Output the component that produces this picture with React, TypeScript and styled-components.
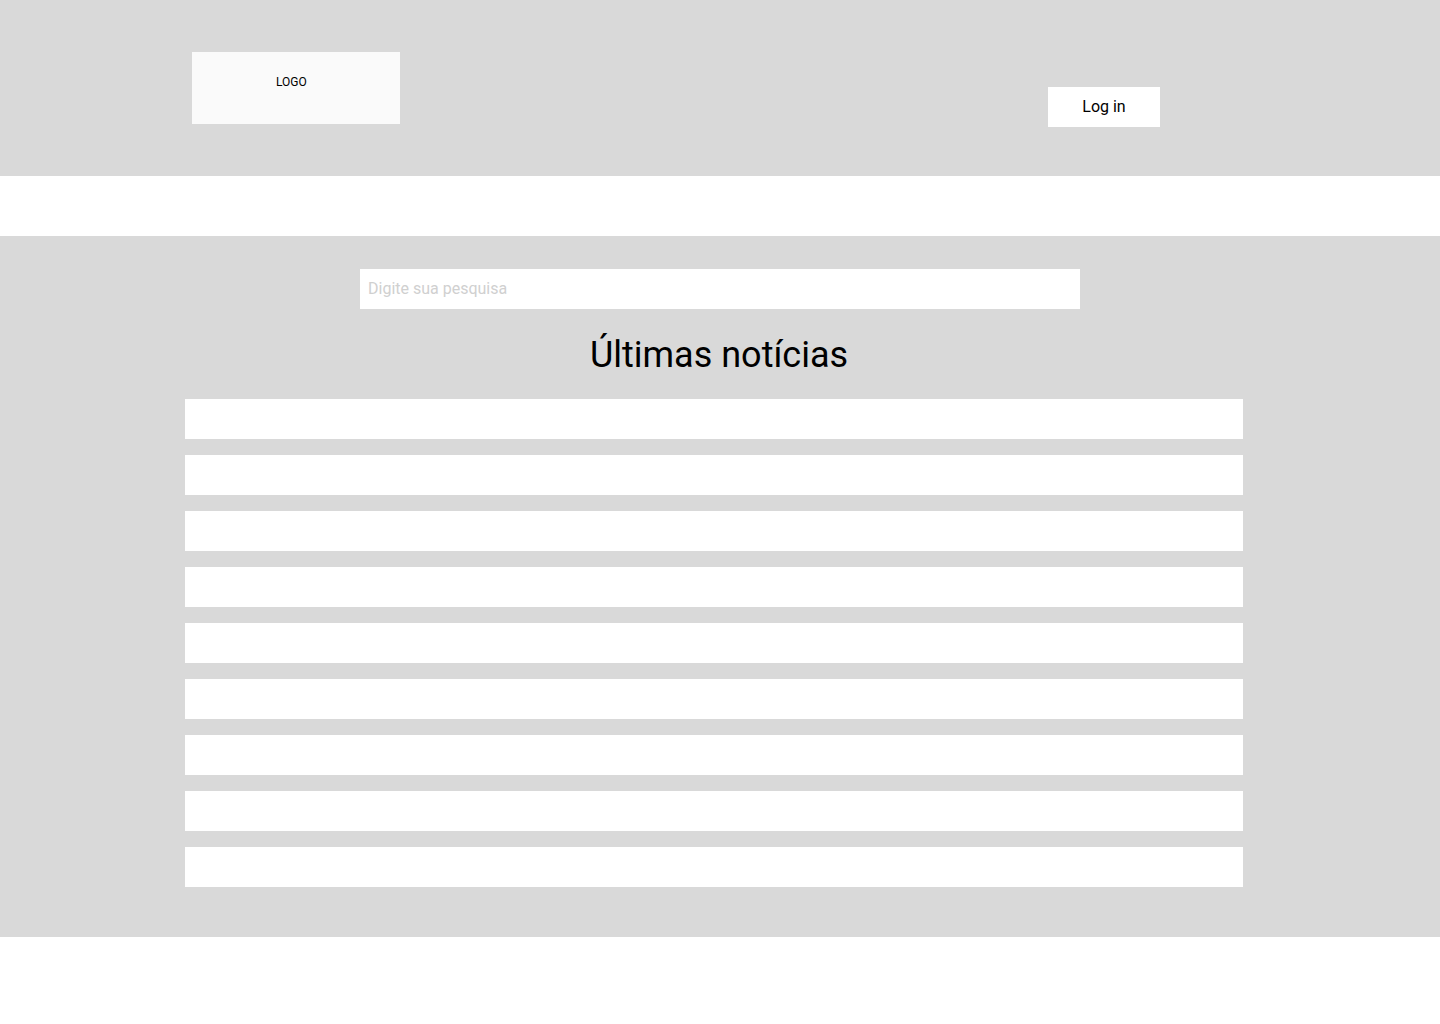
import React from 'react'
import styled, { createGlobalStyle } from 'styled-components'

const GlobalStyle = createGlobalStyle`
  body {
    margin: 0;
    background: #ffffff;
    font-family: Roboto, 'Liberation Sans', sans-serif;
  }
`

const NEWS_COUNT = 9

const App = () => {
  return (
    <>
      <GlobalStyle />
      <Header>
        <Logo>LOGO</Logo>
        <LoginButton>Log in</LoginButton>
      </Header>
      <Spacer />
      <Main>
        <SearchInput placeholder="Digite sua pesquisa" />
        <Title>Últimas notícias</Title>
        <NewsList>
          {Array.from({ length: NEWS_COUNT }).map((_, i) => (
            <NewsItem key={i} />
          ))}
        </NewsList>
      </Main>
    </>
  )
}

const Header = styled.header`
  align-items: flex-start;
  background: #d9d9d9;
  box-sizing: border-box;
  display: flex;
  height: 176px;
  justify-content: space-between;
  padding: 52px 280px 0 192px;
`

const Logo = styled.div`
  background: #fafafa;
  box-sizing: border-box;
  color: #000000;
  font-size: 12px;
  height: 72px;
  padding: 23px 0 0 84px;
  width: 208px;
`

const LoginButton = styled.button`
  background: #ffffff;
  border: none;
  color: #000000;
  cursor: pointer;
  font-family: Roboto, 'Liberation Sans', sans-serif;
  font-size: 16px;
  height: 40px;
  margin-top: 35px;
  padding: 0 0 2px;
  width: 112px;
`

const Spacer = styled.div`
  height: 60px;
`

const Main = styled.main`
  background: #d9d9d9;
  box-sizing: border-box;
  display: flex;
  flex-direction: column;
  padding: 33px 0 50px;
`

const SearchInput = styled.input`
  align-self: center;
  background: #ffffff;
  border: none;
  box-sizing: border-box;
  color: #000000;
  font-family: Roboto, 'Liberation Sans', sans-serif;
  font-size: 16px;
  height: 40px;
  outline: none;
  padding: 0 8px 2px;
  width: 720px;

  &::placeholder {
    color: #d0d0d0;
  }
`

const Title = styled.h1`
  color: #000000;
  font-size: 36px;
  font-weight: 400;
  line-height: 42px;
  margin: 25px 2px 23px 0;
  text-align: center;
`

const NewsList = styled.div`
  display: flex;
  flex-direction: column;
  gap: 16px;
  margin-left: 185px;
  width: 1058px;
`

const NewsItem = styled.div`
  background: #ffffff;
  height: 40px;
`

export default App
